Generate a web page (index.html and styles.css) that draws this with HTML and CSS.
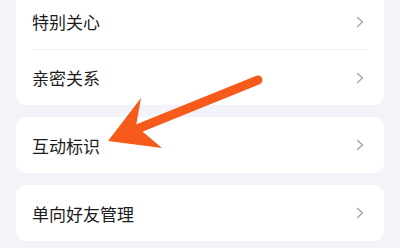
FILE: index.html
```html
<!DOCTYPE html>
<html lang="zh">
<head>
<meta charset="utf-8">
<link rel="stylesheet" href="styles.css">
</head>
<body>
<div class="page">
  <div class="card first">
    <div class="row"><span class="label">特别关心</span><svg class="chev" viewBox="0 0 8 12"><polyline points="1.5,1.5 6.5,6 1.5,10.5"/></svg></div>
    <div class="divider"></div>
    <div class="row"><span class="label">亲密关系</span><svg class="chev" viewBox="0 0 8 12"><polyline points="1.5,1.5 6.5,6 1.5,10.5"/></svg></div>
  </div>
  <div class="card">
    <div class="row"><span class="label">互动标识</span><svg class="chev" viewBox="0 0 8 12"><polyline points="1.5,1.5 6.5,6 1.5,10.5"/></svg></div>
  </div>
  <div class="card">
    <div class="row"><span class="label">单向好友管理</span><svg class="chev" viewBox="0 0 8 12"><polyline points="1.5,1.5 6.5,6 1.5,10.5"/></svg></div>
  </div>
</div>
<svg class="arrow" viewBox="0 0 400 248">
  <line x1="258" y1="80" x2="132" y2="131"/>
  <polygon points="108,141 141,98 136,126 162,148"/>
</svg>
</body>
</html>
```
FILE: styles.css
```css
html, body {
  margin: 0;
  padding: 0;
  background: #f3f4f9;
  width: 400px;
  height: 248px;
  overflow: hidden;
  font-family: "Noto Sans CJK SC", "Noto Sans", sans-serif;
}
.page {
  display: flex;
  flex-direction: column;
  gap: 12px;
  padding: 0 16px;
}
.card {
  background: #ffffff;
  border-radius: 9px;
}
.card.first {
  margin-top: -6px;
}
.row {
  height: 56px;
  display: flex;
  align-items: center;
  justify-content: space-between;
  padding: 0 20px 0 16px;
}
.card.first .row {
  height: 55px;
}
.label {
  font-size: 17px;
  color: #1c1c1c;
  line-height: 1;
}
.chev {
  width: 8px;
  height: 12px;
  fill: none;
  stroke: #a3a3a3;
  stroke-width: 1.4;
  stroke-linecap: round;
  stroke-linejoin: round;
}
.divider {
  height: 1px;
  background: #efefef;
  margin: 0 16px;
}
.arrow {
  position: absolute;
  left: 0;
  top: 0;
  width: 400px;
  height: 248px;
}
.arrow line {
  stroke: #f75b1c;
  stroke-width: 9;
  stroke-linecap: round;
}
.arrow polygon {
  fill: #f75b1c;
}
```
